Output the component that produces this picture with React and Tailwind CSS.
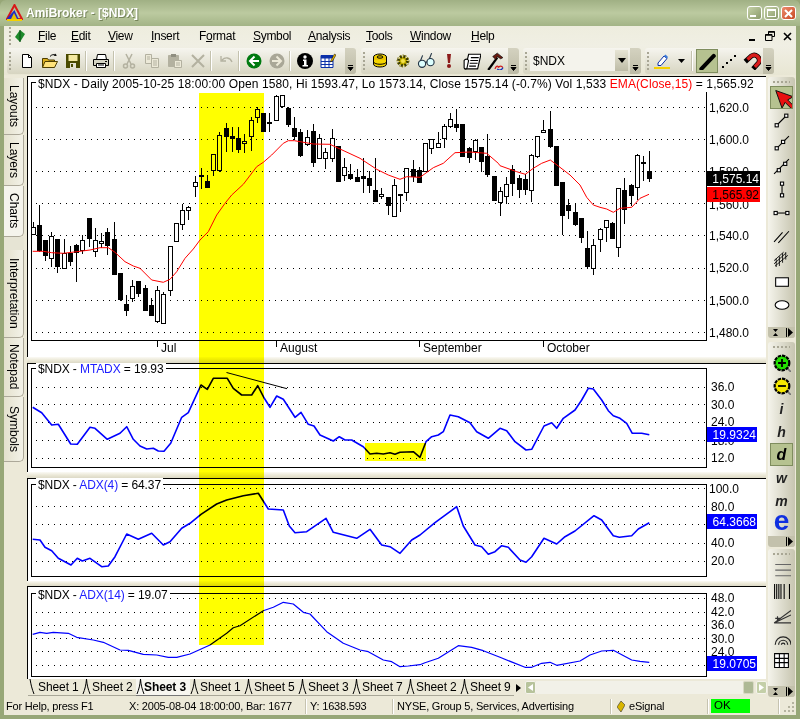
import React from "react";

const C3 = [[98,425,465,440,465,0],[118,375,515,435,513,1],[136,480,542,480,527,1],[154,456,560,468,536,0],[172,478,580,478,560,1],[193,478,566,520,566,0],[211,498,558,520,545,1],[229,492,605,495,518,1],[247,465,523,480,512,0],[268,414,500,414,476,1],[286,445,532,481,517,0],[304,458,505,484,491,0],[322,445,525,456,497,1],[343,426,585,478,584,1],[361,578,662,579,660,1],[379,645,707,672,692,1],[397,600,665,618,658,0],[415,602,650,603,641,1],[436,615,692,625,692,1],[454,655,707,675,707,1],[472,618,728,631,727,0],[490,637,733,643,733,0],[511,498,647,498,634,0],[529,430,486,430,485,0],[547,372,450,391,436,0],[565,377,420,382,394,0],[586,288,350,307,322,0],[604,265,326,286,290,1],[622,285,323,303,323,1],[640,222,288,222,274,0],[658,155,275,166,274,0],[679,129,215,145,170,1],[697,142,215,168,176,1],[715,142,218,175,209,1],[733,162,218,184,193,0],[754,112,212,120,172,0],[772,82,130,88,115,0],[790,100,155,100,155,1],[808,100,155,127,129,1],[829,44,122,48,122,0],[847,44,84,46,82,0],[865,80,140,85,136,1],[883,112,180,145,170,1]];
const C4 = [[121,148,230,156,227,1],[142,150,197,172,196,0],[160,132,260,153,248,1],[178,162,238,175,238,0],[196,205,266,216,238,0],[217,147,245,175,238,0],[235,198,307,198,305,1],[253,235,302,262,287,0],[271,252,300,282,296,1],[292,267,305,291,305,1],[310,235,340,289,296,1],[328,273,338,294,317,1],[346,235,366,330,365,1],[364,325,358,343,350,0],[385,350,404,352,377,1],[403,298,412,316,412,0],[421,342,395,342,346,1],[439,265,362,265,338,0],[460,240,305,267,292,1],[478,262,310,270,308,1],[496,190,275,190,275,0],[514,178,222,178,208,0],[535,157,204,190,203,0],[553,132,205,138,178,0],[571,100,145,118,142,0],[589,88,155,132,143,1],[607,132,230,132,230,1],[628,200,248,205,233,1],[646,178,240,181,217,0],[664,200,275,202,245,1],[682,162,290,228,284,1],[703,288,362,288,362,1],[721,322,407,334,370,0],[739,292,372,313,352,0]];
const C5 = [[37,255,347,268,311,1],[58,285,355,295,330,1],[76,282,345,298,330,1],[94,222,365,226,334,0],[112,168,233,169,230,0],[130,120,160,151,160,0],[151,94,203,148,201,1],[169,198,318,198,318,1],[187,305,465,307,407,1],[205,358,417,376,392,1],[226,370,437,396,435,1],[244,415,490,415,473,1],[262,453,567,505,561,1],[280,478,585,496,568,0],[301,445,515,448,481,0],[319,420,485,421,445,0],[337,425,477,428,476,1],[355,325,530,325,505,0],[373,295,432,331,391,1],[394,312,378,316,348,1],[412,223,360,224,323,0],[430,228,302,246,250,1],[448,214,305,274,298,1]];

const pts = (arr, ox, oy) => arr.map(([x, y]) => `${(ox + x / 3).toFixed(1)},${(oy + y / 3).toFixed(1)}`).join(" ");

const EMA = [
  pts([[98,514],[130,514],[155,518],[190,520],[230,515],[270,510],[300,503],[325,503],[345,517],[375,545],[400,558],[420,565],[455,600],[490,607],[510,598],[530,575],[555,535],[580,507],[600,480],[625,455],[650,405],[675,370],[695,345],[730,313],[770,260],[790,247],[815,225],[850,190],[865,182]],0,80),
  pts([[103,182],[121,185],[160,192],[210,193],[240,207],[300,235],[350,268],[385,285],[420,298],[440,290],[480,292],[520,263],[550,250],[585,218],[630,216],[680,220],[715,250]],260,80),
  pts([[0,257],[50,275],[76,283],[100,265],[125,250],[151,240],[175,258],[210,285],[240,315],[260,352],[280,375],[300,382],[320,387],[340,397],[360,385],[395,382],[420,355],[447,343]],500,80),
].join(" ");

const MTADX = pts([[98,202],[125,218],[155,255],[175,253],[212,312],[232,313],[270,262],[285,265],[322,298],[360,280],[380,260],[400,298],[420,318],[440,327],[460,325],[475,333],[492,334],[512,310],[545,232],[565,218],[603,135],[622,148],[640,115],[682,115],[700,145],[725,165],[755,165],[773,137],[793,175],[810,202],[830,168],[850,178],[885,232],[903,217],[925,253],[942,258],[960,285],[1000,303],[1018,290],[1035,300],[1055,300],[1090,320],[1110,342],[1130,340],[1150,342],[1170,338],[1185,343]],0,340) + " " + pts([[0,337],[40,335],[60,352],[78,305],[95,290],[115,285],[130,275],[150,225],[175,230],[210,248],[230,275],[265,295],[300,265],[320,272],[345,305],[378,330],[395,328],[432,258],[455,248],[470,265],[490,235],[525,210],[545,180],[565,145],[580,147],[605,180],[625,212],[640,227],[660,235],[680,250],[697,280],[725,280],[748,284]],400,340);

const ADX4 = pts([[98,598],[120,600],[135,622],[155,632],[175,655],[213,675],[232,655],[247,663],[270,655],[305,680],[325,678],[345,650],[380,582],[415,598],[455,580],[490,615],[510,605],[545,565],[570,550],[603,523],[650,492],[680,480],[730,467],[775,460],[805,507],[850,510],[868,558],[885,578],[920,575],[978,535],[1000,577],[1070,595],[1110,568],[1145,615],[1170,620]],0,340) + " " + pts([[0,640],[35,600],[60,585],[105,548],[170,500],[190,558],[225,615],[245,620],[265,643],[285,635],[305,617],[325,622],[360,660],[378,667],[395,650],[432,595],[470,612],[495,590],[525,573],[582,527],[605,540],[640,587],[658,592],[695,587],[715,567],[748,548]],400,340);

const ADX14 = pts([[98,163],[120,157],[140,160],[160,157],[205,160],[230,172],[280,180],[310,187],[360,210],[385,211],[430,223],[470,225],[505,232],[530,232],[570,222],[630,195],[680,160],[700,143],[720,137],[790,92],[820,82],[850,67],[880,72],[910,97],[930,102],[980,155],[1030,190],[1080,210],[1105,215],[1150,240],[1175,245]],0,580) + " " + pts([[0,260],[25,258],[60,254],[75,248],[115,235],[175,197],[215,202],[250,212],[300,232],[375,262],[395,262],[425,250],[450,247],[470,256],[540,243],[570,225],[605,213],[640,211],[695,240],[720,244],[748,247]],400,580);

function Candles() {
  const all = [...C3.map((c) => [0, ...c]), ...C4.map((c) => [260, ...c]), ...C5.map((c) => [500, ...c])];
  return all.map(([ox, x, wt, wb, bt, bb, f], i) => {
    const cx = Math.round(ox + x / 3);
    const Y = (z) => Math.round(80 + z / 3);
    const top = Y(bt), bot = Y(bb);
    return (
      <g key={i} shapeRendering="crispEdges">
        <rect x={cx} y={Y(wt)} width="1" height={Math.max(1, Y(wb) - Y(wt))} fill="#000" />
        {f ? (
          <rect x={cx - 2} y={top} width="5" height={Math.max(2, bot - top)} fill="#000" />
        ) : (
          <rect x={cx - 1.5} y={top + 0.5} width="4" height={Math.max(2, bot - top - 1)} fill="#fff" stroke="#000" />
        )}
      </g>
    );
  });
}

function Dots({ ys }) {
  const out = [];
  ys.forEach((y) => {
    for (let i = 0; i < 110; i++) {
      const x = Math.round(35.6 + i * 6.13);
      if (x < 705) out.push(<rect key={y + "-" + i} x={x} y={Math.round(y)} width="1" height="1" fill="#000" />);
    }
  });
  return <g shapeRendering="crispEdges">{out}</g>;
}

function Frame({ top, bottom }) {
  return <rect x="31.5" y={top + 0.5} width="675" height={bottom - top} fill="none" stroke="#000" shapeRendering="crispEdges" />;
}

function Ax({ x = 711, y, children }) {
  return <text x={x} y={y + 4.5} fill="#000" className="text-[12px]">{children}</text>;
}

function Tag({ children, cls }) {
  return <div className={"absolute flex items-center justify-end text-[12px] pr-[1px] leading-none " + cls}>{children}</div>;
}

function Pane({ top, h, children, label }) {
  return (
    <div className="relative bg-white shadow-[inset_1px_1px_0_#000]" style={{ height: h }}>
      <svg width="739" height={h} viewBox={`27 ${top} 739 ${h}`} className="block">{children[0]}</svg>
      {label}
      {children[1]}
    </div>
  );
}

function Sep({ h }) {
  return <div className="bg-linear-to-b from-[#fbfaf5] via-[#ece9d8] to-[#dcd9c6]" style={{ height: h }} />;
}

/* toolbar drawings */
const Ic = ({ children, s = 16 }) => <svg width={s} height={s} viewBox="0 0 16 16">{children}</svg>;
const G = "#b3b1a0";
const icons = {
  doc: <Ic><path d="M3.5 1.5h6l3 3v10h-9z" fill="#fff" stroke="#000" /><path d="M9.5 1.5v3h3" fill="none" stroke="#000" /></Ic>,
  open: <Ic><path d="M.5 5.5h5l1 1.5h6v7H.5z" fill="#d9ad1f" stroke="#4d3d00" /><path d="M3 8.5h12.5l-3 6H.5z" fill="#ffe27a" stroke="#4d3d00" /><path d="M8 3.5c1.500-2 4-2.500 6-1" fill="none" stroke="#000" /><path d="M13 .5l2 2-3 .5z" fill="#000" /></Ic>,
  save: <Ic><path d="M1 1h14v14H1z" fill="#4a4a00" /><rect x="3.500" y="2" width="9" height="6" fill="#f4e9a0" /><rect x="5" y="10" width="6" height="5" fill="#e4e2d0" /><rect x="6" y="11" width="2" height="3" fill="#4a4a00" /></Ic>,
  print: <Ic><path d="M4.500 1.500h8l1 5h-10z" fill="#fff" stroke="#000" /><path d="M.5 6.500h15v6H.5z" fill="#d5d4c4" stroke="#000" /><path d="M3.500 10.500h9v4h-9z" fill="#fff" stroke="#000" /><path d="M5 12h6" stroke="#000" /><rect x="12" y="8" width="2" height="1" fill="#000" /></Ic>,
  cut: <Ic><path d="M5 1l5 10M11 1L6 11" stroke={G} strokeWidth="1.500" fill="none" /><circle cx="4.500" cy="13" r="2" fill="none" stroke={G} strokeWidth="1.500" /><circle cx="11.500" cy="13" r="2" fill="none" stroke={G} strokeWidth="1.500" /></Ic>,
  copy: <Ic><path d="M1.500 1.500h6v9h-6z" fill="#ece9d8" stroke={G} /><path d="M7.500 5.500h7v9h-7z" fill="#ece9d8" stroke={G} /><path d="M3 4h3M3 6h3M9 8h4M9 10h4M9 12h4" stroke={G} /></Ic>,
  paste: <Ic><path d="M1.500 2.500h10v11h-10z" fill={G} stroke={G} /><rect x="4" y="1" width="5" height="3" fill="#8f8e80" /><path d="M7.500 7.500h7v7h-7z" fill="#ece9d8" stroke={G} /><path d="M9 10h4M9 12h4" stroke={G} /></Ic>,
  del: <Ic><path d="M2 2l12 12M14 2L2 14" stroke={G} strokeWidth="2" /></Ic>,
  undo: <Ic><path d="M4 7c3-3 8-3 10 2M3 3v5h5" fill="none" stroke={G} strokeWidth="1.300" /></Ic>,
  back: <Ic><circle cx="8" cy="8" r="7.500" fill="#007a10" /><path d="M8.500 3.500L4 8l4.500 4.500M4.500 8H13" fill="none" stroke="#fff" strokeWidth="2" /></Ic>,
  fwd: <Ic><circle cx="8" cy="8" r="7.500" fill="#a9a797" /><path d="M7.500 3.500L12 8l-4.500 4.500M11.500 8H3" fill="none" stroke="#ece9d8" strokeWidth="2" /></Ic>,
  info: <Ic><circle cx="8" cy="8" r="8" fill="#000" /><circle cx="8" cy="4" r="1.700" fill="#fff" /><path d="M6 6.500h3.500V12H11v1.500H5.500V12H7V8H6z" fill="#fff" /></Ic>,
  calc: <Ic><path d="M1 2.500h12v12H1z" fill="#fff" stroke="#0a2fa8" /><path d="M1 2.500h12v3H1z" fill="#0a2fa8" /><path d="M1 8.500h12M1 11.500h12M5 5v9M9 5v9" stroke="#0a2fa8" /><path d="M11 7l3.500-6 1.500 1-3.500 6-2 1z" fill="#e8b400" stroke="#000" strokeWidth=".5" /></Ic>,
  coins: <Ic><ellipse cx="8" cy="4" rx="6.500" ry="3" fill="#f5d500" stroke="#000" /><path d="M1.500 4v3c0 4 13 4 13 0V4" fill="#e9c400" stroke="#000" /><path d="M1.500 7v4c0 4 13 4 13 0V7" fill="#f5d500" stroke="#000" /><path d="M1.500 9c1 3 12 3 13 0" fill="none" stroke="#000" /><ellipse cx="8" cy="4" rx="3" ry="1.200" fill="none" stroke="#000" /></Ic>,
  gear: <Ic><circle cx="8" cy="8" r="4.500" fill="#c7b400" stroke="#3b3b00" strokeWidth="3" strokeDasharray="2 1.500" /><circle cx="8" cy="8" r="2" fill="#f2e14a" /><circle cx="8" cy="8" r="6" fill="none" stroke="#8a7d00" strokeDasharray="1.500 1.500" /></Ic>,
  glass: <Ic s={18}><circle cx="4.500" cy="10.500" r="3.200" fill="#dff" stroke="#234" /><circle cx="12" cy="9" r="3.200" fill="#dff" stroke="#234" /><path d="M7.500 9.500c1-.8 1.200-.8 1.700-.8M3 8l2-5M11 6l2-5" fill="none" stroke="#234" /></Ic>,
  bang: <Ic><path d="M6 1h4l-1 9H7z" fill="#8c1a1a" /><circle cx="8" cy="13" r="2" fill="#8c1a1a" /></Ic>,
  notes: <Ic s={18}><path d="M5 2h11l-3 13H2z" fill="#fff" stroke="#000" /><path d="M1 7.500c1-1.500 3-1.500 4 0l-1.500 7c-1 1-2.500.5-2.500-.5z" fill="#fff" stroke="#000" /><path d="M7 5h7M6.500 7.500h7M6 10h7M5.500 12.500h6" stroke="#000" /></Ic>,
  ham: <Ic s={18}><path d="M2 16L10 5" stroke="#000" strokeWidth="2" /><path d="M6 4l4-3 5 4-2 1-3-2-1 3z" fill="#6a1a10" stroke="#000" strokeWidth=".6" /><path d="M8 15c1-3 3-3 3-1M11 14c1-2 3-2 4 0" fill="none" stroke="#d01818" strokeWidth="1.200" /><path d="M10 15c2 2 4 1 5-1" fill="none" stroke="#1030c0" strokeWidth="1.200" /></Ic>,
  hl: <Ic><path d="M4 10l6-7 3 2.500-6 7H4z" fill="#fff" stroke="#0a2fa8" /><path d="M10 3l1.500-1.500L14 4l-1 1.500z" fill="#3a7ad8" /><rect x="0" y="14" width="16" height="2" fill="#f5cf00" /></Ic>,
  thick: <Ic s={18}><path d="M3 15L14 3.500" stroke="#000" strokeWidth="3.600" strokeLinecap="round" /></Ic>,
  dotted: <Ic><g fill="#000"><rect x="1" y="13" width="2" height="2" /><rect x="5" y="9" width="2" height="2" /><rect x="9" y="6" width="2" height="2" /><rect x="13" y="2" width="2" height="2" /></g></Ic>,
  magnet: <Ic s={18}><path d="M2 8.500L7.500 3.500C11 1 16 5 14 9.500L9 15" fill="none" stroke="#000" strokeWidth="4.400" /><path d="M4 6.700L7.500 3.500C11 1 16 5 14 9.500L10.500 13.300" fill="none" stroke="#d81c1c" strokeWidth="3" /></Ic>,
};

function Grip({ v }) {
  const n = [0, 1, 2, 3, 4];
  return v ? (
    <svg width="17" height="2" className="block mx-auto">{n.map((i) => <rect key={i} x={i * 4} y="0" width="2" height="2" fill="#a8a694" />)}</svg>
  ) : (
    <svg width="2" height="18" className="block">{n.map((i) => <rect key={i} x="0" y={i * 4} width="2" height="2" fill="#a8a694" />)}</svg>
  );
}

function Chev() {
  return (
    <div className="ml-auto w-[11px] self-stretch bg-linear-to-b from-[#d4d2c0] to-[#bdbba6] rounded-r-[3px] flex flex-col items-center justify-end pb-[3px]">
      <svg width="7" height="6"><path d="M1 0.500h5M1 2.500h5L3.500 5.500z" stroke="#000" strokeWidth="1" fill="#000" /></svg>
    </div>
  );
}

function Band({ cls, children }) {
  return <div className={"flex items-center h-[26px] rounded-[3px] bg-linear-to-b from-[#f6f5ef] to-[#d7d5c1] " + cls}>{children}</div>;
}
const Slot = ({ i, cls = "w-[23px]" }) => <div className={"flex items-center justify-center " + cls}>{icons[i]}</div>;
const TSep = ({ cls = "w-[5px]" }) => <div className={"flex justify-center " + cls}><div className="w-px h-[20px] bg-[#fff] shadow-[-1px_0_0_#c4c2ae]" /></div>;

/* right-hand drawings */
const rIcons = {
  arrow: <Ic s={20}><path d="M3 2l5 14 2.500-4.500L16 17l2-2-5.500-5.500L17 7z" fill="#e81010" stroke="#111" strokeWidth=".8" /></Ic>,
  seg: <Ic s={17}><path d="M4 12L12 4" stroke="#000" /><rect x="2" y="11" width="3" height="3" fill="#fff" stroke="#000" /><rect x="11" y="2" width="3" height="3" fill="#fff" stroke="#000" /></Ic>,
  ray: <Ic s={17}><path d="M3 13L15 1" stroke="#000" /><rect x="2" y="11" width="3" height="3" fill="#fff" stroke="#000" /><rect x="8" y="5" width="3" height="3" fill="#fff" stroke="#000" /></Ic>,
  ext: <Ic s={17}><path d="M1 15L15 1" stroke="#000" /><rect x="4" y="10" width="3" height="3" fill="#fff" stroke="#000" /><rect x="10" y="4" width="3" height="3" fill="#fff" stroke="#000" /></Ic>,
  vert: <Ic s={17}><path d="M8.500 3v10" stroke="#000" /><rect x="7" y="1" width="3" height="3" fill="#fff" stroke="#000" /><rect x="7" y="12" width="3" height="3" fill="#fff" stroke="#000" /></Ic>,
  horz: <Ic s={17}><path d="M3 8.500h10" stroke="#000" /><rect x="1" y="7" width="3" height="3" fill="#fff" stroke="#000" /><rect x="12" y="7" width="3" height="3" fill="#fff" stroke="#000" /></Ic>,
  par: <Ic s={17}><path d="M1 14L9 5M5 15L15 4" stroke="#000" fill="none" /></Ic>,
  fib: <Ic s={17}><path d="M1 13L12 3M2 15L14 5M1 10L10 2M3 16V8M6 15V6M9 12V3M12 9V2" stroke="#000" strokeWidth=".8" fill="none" /></Ic>,
  rect: <Ic s={17}><rect x="2.500" y="4.500" width="12" height="8" fill="#fff" stroke="#000" /></Ic>,
  ell: <Ic s={17}><ellipse cx="8.500" cy="8.500" rx="6.500" ry="4" fill="#fff" stroke="#000" /></Ic>,
  zin: <Ic s={18}><path d="M12 12l4 4" stroke="#777" strokeWidth="1.500" /><circle cx="8" cy="8" r="6.500" fill="#22e000" stroke="#000" strokeWidth="2" strokeDasharray="3 .8" /><path d="M8 4.500v7M4.500 8h7" stroke="#000" strokeWidth="1.600" /></Ic>,
  zout: <Ic s={18}><path d="M12 12l4 4" stroke="#777" strokeWidth="1.500" /><circle cx="8" cy="8" r="6.500" fill="#f6e800" stroke="#000" strokeWidth="2" strokeDasharray="3 .8" /><path d="M4.500 8h7" stroke="#000" strokeWidth="1.600" /></Ic>,
  hl: <Ic s={18}><path d="M2 4h14M2 9h14M2 14h14" stroke="#666" /></Ic>,
  vl: <Ic s={17}><path d="M1.500 1v14M3.500 1v14M5.500 1v14M7.500 1v14M10.500 1v14M15.500 1v14" stroke="#000" /></Ic>,
  fan: <Ic s={18}><path d="M1 15L16 4M1 15L16 8M1 15h15M2 11h5M4 14V9" stroke="#333" fill="none" /></Ic>,
  arc: <Ic s={18}><path d="M2 14a7 7 0 0 1 14 0M5 14a4 4 0 0 1 8 0M7.500 14a1.500 1.500 0 0 1 3 0" stroke="#222" strokeWidth="1.100" fill="none" /></Ic>,
  grid: <Ic s={17}><path d="M1.500 1.500h13v13h-13zM1.500 6h13M1.500 10h13M6 1.500v13M10.500 1.500v13" stroke="#000" fill="#fff" /></Ic>,
};

const RSlot = ({ i }) => <div className="h-[23px] flex items-center justify-center">{rIcons[i]}</div>;
const Letter = ({ t }) => <div className="h-[23px] flex items-center justify-center font-bold italic text-[14px] text-[#222] leading-none">{t}</div>;
const Sel = ({ children }) => <div className="h-[23px] w-[23px] mx-auto flex items-center justify-center bg-[#b6c290] border border-[#7f8d5e]">{children}</div>;

function VBand({ cls, children, double = false }) {
  return (
    <div className={"flex flex-col w-[27px] rounded-[3px] bg-linear-to-r from-[#f5f4ec] to-[#c7c5b0] " + cls}>
      {children}
      <div className="mt-auto h-[11px] bg-[#c3c1ac] rounded-b-[3px] flex items-center justify-end gap-[7px] pr-[2px]">
        {double && <svg width="7" height="9"><path d="M1 1h5L3.500 4zM1 8h5L3.500 5z" fill="#000" /></svg>}
        <svg width="7" height="9"><path d="M0.500 0v9" stroke="#000" /><path d="M2 0l5 4.500L2 9z" fill="#000" /></svg>
      </div>
    </div>
  );
}

const Menu = ({ cls, u, rest, pre = "" }) => (
  <div className={"text-[12px] tracking-[-0.3px] leading-[20px] text-black " + cls}>{pre}<span className="underline">{u}</span>{rest}</div>
);

const LTab = ({ cls, t }) => (
  <div className={"flex items-center justify-center rounded-br-[5px] border-b border-r border-[#aca899] [writing-mode:vertical-rl] text-[12px] text-black bg-linear-to-l from-[#f3f2e8] to-[#e4e1cd] " + cls}>{t}</div>
);

function SheetSep({ first }) {
  return (
    <svg width="10" height="16" className="shrink-0">
      {first ? <path d="M2 0c1 6 2 10 4 15" fill="none" stroke="#000" /> : <path d="M4.500 0C4 6 3 10 1 15M4.500 0c.5 6 1.500 10 3.500 15" fill="none" stroke="#000" />}
    </svg>
  );
}
const Sheet = ({ t, bold, first }) => (
  <div className={"flex items-center w-[54px] h-full text-[12px] tracking-[-0.1px] " + (bold ? "font-bold bg-[#f7f6f0] border-b border-[#777]" : "border-b border-[#a9a798]")}>
    <SheetSep first={first} />
    <span className={bold ? "-ml-[2px] whitespace-nowrap" : "whitespace-nowrap"}>{t}</span>
  </div>
);
const SB = ({ cls, children }) => <div className={"flex items-center text-[11px] tracking-[-0.2px] text-black whitespace-nowrap h-full " + cls}>{children}</div>;
const SSep = () => <div className="w-[2px] h-[15px] bg-[#c6c3b0] border-r border-white self-center" />;

export default function App() {
  return (
    <div className="w-[800px] h-[719px] overflow-hidden flex flex-col bg-[#97a777] font-['Liberation_Sans',Arial,sans-serif] text-black">
      {/* title bar */}
      <div className="h-[26px] flex items-center bg-linear-to-b from-[#a0b084] via-[#bccaa0] to-[#a3b486] rounded-t-[6px] pl-[6px] pr-[4px]">
        <svg width="17" height="18" viewBox="0 0 17 18" className="shrink-0">
          <path d="M8.500 1L16 15H1z" fill="none" stroke="#d81818" strokeWidth="2" />
          <path d="M8.500 6L12.500 15H.5z" fill="#1c2cc8" />
          <path d="M1 15h15v2H1z" fill="#f3d000" />
          <path d="M8 9l3 6H5z" fill="#e8c000" />
        </svg>
        <span className="ml-[3px] text-[12px] font-bold text-white [text-shadow:1px_1px_0_#76855a]">AmiBroker - [$NDX]</span>
        <div className="ml-auto flex gap-[2px]">
          <div className="w-[15px] h-[14px] rounded-[3px] border border-white bg-linear-to-br from-[#c6d2a8] to-[#8b9b6c] flex items-end justify-start p-[2px]"><div className="w-[6px] h-[2px] bg-white" /></div>
          <div className="w-[15px] h-[14px] rounded-[3px] border border-white bg-linear-to-br from-[#c6d2a8] to-[#8b9b6c] flex items-center justify-center"><div className="w-[9px] h-[8px] border border-white border-t-2" /></div>
          <div className="w-[15px] h-[14px] rounded-[3px] border border-white bg-linear-to-br from-[#ec8a6c] to-[#c84820] flex items-center justify-center">
            <svg width="9" height="9"><path d="M1 1l7 7M8 1L1 8" stroke="#fff" strokeWidth="2" /></svg>
          </div>
        </div>
      </div>
      {/* window body */}
      <div className="flex-1 flex flex-col mx-[4px] mb-[4px] bg-[#ece9d8] min-h-0">
        {/* menu */}
        <div className="h-[20px] flex items-center bg-linear-to-b from-[#eeedde] to-[#f0efe4] relative">
          <div className="ml-[5px] w-[29px] flex items-center gap-[4px]">
            <Grip />
            <svg width="10" height="12" viewBox="0 0 10 12"><path d="M5 0l5 4-5 8-5-5z" fill="#1d8a2a" /><path d="M5 0v12" stroke="#0a4a14" /></svg>
          </div>
          <Menu cls="w-[33px]" u="F" rest="ile" />
          <Menu cls="w-[37px]" u="E" rest="dit" />
          <Menu cls="w-[43px]" u="V" rest="iew" />
          <Menu cls="w-[48px]" u="I" rest="nsert" />
          <Menu cls="w-[54px]" pre="F" u="o" rest="rmat" />
          <Menu cls="w-[55px]" u="S" rest="ymbol" />
          <Menu cls="w-[58px]" u="A" rest="nalysis" />
          <Menu cls="w-[44px]" u="T" rest="ools" />
          <Menu cls="w-[61px]" u="W" rest="indow" />
          <Menu cls="w-[40px]" u="H" rest="elp" />
          <div className="ml-auto mr-[4px] flex items-center gap-[8px]">
            <svg width="9" height="12"><rect x="1" y="9" width="6" height="2" fill="#000" /></svg>
            <svg width="10" height="10"><path d="M3.500 3V.5h6v5H7M.5 3.500h6.500v6H.5z" fill="none" stroke="#000" /><path d="M.5 4h6.500M3.500 1h6" stroke="#000" strokeWidth="1.500" /></svg>
            <svg width="9" height="9"><path d="M1 1l7 7M8 1L1 8" stroke="#000" strokeWidth="1.600" /></svg>
          </div>
        </div>
        {/* toolbars */}
        <div className="h-[29px] flex items-center pl-[3px] gap-[5px] bg-linear-to-b from-[#f0efe4] to-[#e8e6d3]">
          <Band cls="w-[349px] pl-[2px]">
            <div className="w-[6px]"><Grip /></div>
            <Slot i="doc" /><Slot i="open" /><Slot i="save" /><TSep />
            <Slot i="print" /><TSep />
            <Slot i="cut" /><Slot i="copy" /><Slot i="paste" /><Slot i="del" /><TSep />
            <Slot i="undo" /><TSep />
            <Slot i="back" /><Slot i="fwd" /><TSep />
            <Slot i="info" /><Slot i="calc" />
            <Chev />
          </Band>
          <Band cls="w-[158px] pl-[2px]">
            <div className="w-[5px]"><Grip /></div>
            <Slot i="coins" /><Slot i="gear" /><Slot i="glass" /><Slot i="bang" /><Slot i="notes" /><Slot i="ham" />
            <Chev />
          </Band>
          <Band cls="w-[118px] pl-[2px] -ml-[1px]">
            <div className="w-[5px]"><Grip /></div>
            <div className="w-[98px] h-[21px] bg-[#f4f3ec] flex items-center text-[12px] pl-[3px]">
              $NDX
              <div className="ml-auto w-[13px] h-full bg-linear-to-b from-[#e6e4d4] to-[#bdbba6] flex items-center justify-center">
                <svg width="8" height="5"><path d="M0 0h8L4 5z" fill="#000" /></svg>
              </div>
            </div>
            <Chev />
          </Band>
          <Band cls="w-[129px] pl-[2px] -ml-[1px]">
            <div className="w-[5px]"><Grip /></div>
            <Slot i="hl" cls="w-[20px]" />
            <div className="w-[14px] flex justify-center ml-[3px]"><svg width="7" height="4"><path d="M0 0h7L3.500 4z" fill="#000" /></svg></div>
            <TSep cls="w-[7px]" />
            <div className="w-[23px] h-[24px] flex items-center justify-center bg-[#b6c290] border border-[#7f8d5e]">{icons.thick}</div>
            <Slot i="dotted" cls="w-[22px]" />
            <Slot i="magnet" cls="w-[23px]" />
            <Chev />
          </Band>
        </div>
        {/* main */}
        <div className="flex-1 flex min-h-0">
          {/* left tabs */}
          <div className="w-[23px] flex flex-col pt-[3px] pr-[3px]">
            <LTab cls="h-[57px]" t="Layouts" />
            <LTab cls="h-[51px]" t="Layers" />
            <div className="h-[51px] w-[20px] flex items-center justify-center rounded-br-[5px] border-b border-r border-[#aca899] bg-[#f5f4ec] [writing-mode:vertical-rl] text-[12px]">Charts</div>
            <div className="h-[13px] bg-[#e6e4d4]" />
            <LTab cls="h-[88px]" t="Interpretation" />
            <LTab cls="h-[59px]" t="Notepad" />
            <LTab cls="h-[65px]" t="Symbols" />
          </div>
          {/* centre */}
          <div className="w-[739px] flex flex-col relative">
            <div className="h-[1px]" />
            <Pane top={76} h={281} label={
              <div className="absolute left-[9px] top-[1px] bg-white px-[2px] leading-[15px] text-[12px] tracking-[0.1px] whitespace-nowrap">
                $NDX - Daily 2005-10-25 18:00:00 Open 1580, Hi 1593.47, Lo 1573.14, Close 1575.14 (-0.7%) Vol 1,533 <span className="text-[#ff0000]">EMA(Close,15)</span> = 1,565.92
              </div>
            }>
              {[
                <g key="s">
                  <Dots ys={[107.3, 139.3, 171.3, 203.3, 235.3, 268, 300, 332.3]} />
                  <Frame top={82} bottom={340} />
                  <Candles />
                  <polyline points={EMA} fill="none" stroke="#ff0000" strokeWidth="1" />
                  {[["1,620.0", 107], ["1,600.0", 139.5], ["1,580.0", 171], ["1,560.0", 204], ["1,540.0", 235], ["1,520.0", 267], ["1,500.0", 300], ["1,480.0", 332]].map(([t, y]) => <Ax key={t} x={709} y={y}>{t}</Ax>)}
                  <g shapeRendering="crispEdges" fill="#000">
                    <rect x="157" y="341" width="1" height="6" /><rect x="276" y="341" width="1" height="6" /><rect x="419" y="341" width="1" height="6" /><rect x="543" y="341" width="1" height="6" />
                  </g>
                  <text x="161" y="352" className="text-[12px]">Jul</text>
                  <text x="280" y="352" className="text-[12px]">August</text>
                  <text x="423" y="352" className="text-[12px]">September</text>
                  <text x="547" y="352" className="text-[12px]">October</text>
                </g>,
                <React.Fragment key="h">
                  <Tag cls="left-[680px] top-[95px] w-[53px] h-[15px] bg-black text-white">1,575.14</Tag>
                  <Tag cls="left-[680px] top-[111px] w-[53px] h-[15px] bg-[#ff0000] text-black">1,565.92</Tag>
                </React.Fragment>,
              ]}
            </Pane>
            <Sep h={6} />
            <Pane top={363} h={109} label={
              <div className="absolute left-[9px] top-0 bg-white px-[2px] leading-[13px] text-[12px] tracking-[-0.1px] whitespace-nowrap">$NDX - <span className="text-[#2020ff]">MTADX</span> = 19.93</div>
            }>
              {[
                <g key="s">
                  <Dots ys={[386.7, 404.3, 422.3, 440, 458.3]} />
                  <Frame top={368} bottom={467} />
                  {[["36.0", 386], ["30.0", 404], ["24.0", 421.5], ["18.0", 440], ["12.0", 457.5]].map(([t, y]) => <Ax key={t} y={y}>{t}</Ax>)}
                  <polyline points={MTADX} fill="none" stroke="#0000ff" strokeWidth="1.600" strokeLinejoin="round" />
                  <path d="M226.500 372.500L287 388.700" stroke="#000" strokeWidth="1" />
                </g>,
                <Tag key="h" cls="left-[680px] top-[64px] w-[50px] h-[15px] bg-[#0000ff] text-white">19.9324</Tag>,
              ]}
            </Pane>
            <Sep h={6} />
            <Pane top={478} h={103} label={
              <div className="absolute left-[9px] top-0 bg-white px-[2px] leading-[14px] text-[12px] tracking-[-0.1px] whitespace-nowrap">$NDX - <span className="text-[#2020ff]">ADX(4)</span> = 64.37</div>
            }>
              {[
                <g key="s">
                  <Dots ys={[488.3, 505.7, 524.3, 542.7, 560.7]} />
                  <Frame top={484} bottom={576} />
                  {[["100.0", 488, 709], ["80.0", 506.3, 711], ["60.0", 524, 711], ["40.0", 542, 711], ["20.0", 560, 711]].map(([t, y, x]) => <Ax key={t} x={x} y={y}>{t}</Ax>)}
                  <polyline points={ADX4} fill="none" stroke="#0000ff" strokeWidth="1.600" strokeLinejoin="round" />
                </g>,
                <Tag key="h" cls="left-[680px] top-[36px] w-[50px] h-[15px] bg-[#0000ff] text-white">64.3668</Tag>,
              ]}
            </Pane>
            <Sep h={5} />
            <Pane top={586} h={93} label={
              <div className="absolute left-[9px] top-[2px] bg-white px-[2px] leading-[14px] text-[12px] tracking-[-0.1px] whitespace-nowrap">$NDX - <span className="text-[#2020ff]">ADX(14)</span> = 19.07</div>
            }>
              {[
                <g key="s">
                  <Dots ys={[597.7, 611.7, 625, 637.7, 651.3, 665]} />
                  <Frame top={593} bottom={676} />
                  {[["48.0", 597.7], ["42.0", 611.7], ["36.0", 624.5], ["30.0", 638], ["24.0", 651.5]].map(([t, y]) => <Ax key={t} y={y}>{t}</Ax>)}
                  <polyline points={ADX14} fill="none" stroke="#0000ff" strokeWidth="1.200" strokeLinejoin="round" />
                </g>,
                <Tag key="h" cls="left-[680px] top-[70px] w-[50px] h-[15px] bg-[#0000ff] text-white">19.0705</Tag>,
              ]}
            </Pane>
            {/* sheet tabs */}
            <div className="flex-1 flex items-start pl-[1px] bg-[#ece9d8]">
              <div className="flex h-[17px] items-center">
                <Sheet t="Sheet 1" first />
                <Sheet t="Sheet 2" />
                <Sheet t="Sheet 3" bold />
                <Sheet t="Sheet 1" />
                <Sheet t="Sheet 5" />
                <Sheet t="Sheet 3" />
                <Sheet t="Sheet 7" />
                <Sheet t="Sheet 2" />
                <Sheet t="Sheet 9" />
                <svg width="9" height="8" className="ml-[1px] shrink-0"><path d="M1 0l5 4-5 4z" fill="#000" /></svg>
                <div className="w-[11px] h-[13px] ml-[1px] rounded-[2px] bg-[#b7c39b] border border-[#f5f4ec] flex items-center justify-center"><svg width="5" height="7"><path d="M5 0v7L0 3.500z" fill="#fff" /></svg></div>
                <div className="w-[207px] h-[13px] bg-[#f2f1e8]" />
                <div className="w-[11px] h-[13px] rounded-[2px] bg-[#aeb995] border border-[#d8d8c4]" />
                <div className="w-[11px] h-[13px] ml-[2px] rounded-[2px] bg-[#c4cfa8] border border-[#f5f4ec] flex items-center justify-center"><svg width="5" height="7"><path d="M0 0v7l5-3.500z" fill="#fff" /></svg></div>
              </div>
            </div>
            {/* drawing overlays */}
            <div className="absolute left-[172px] top-[18px] w-[65px] h-[552px] bg-[#ffff00] mix-blend-multiply pointer-events-none" />
            <div className="absolute left-[338px] top-[368px] w-[61px] h-[18px] bg-[#ffff00] mix-blend-multiply pointer-events-none" />
          </div>
          {/* right toolbars */}
          <div className="w-[28px] ml-[2px] flex flex-col pt-[2px]">
            <VBand cls="h-[261px]" double>
              <div className="h-[9px] pt-[4px]"><Grip v /></div>
              <Sel>{rIcons.arrow}</Sel>
              <RSlot i="seg" /><RSlot i="ray" /><RSlot i="ext" /><RSlot i="vert" /><RSlot i="horz" /><RSlot i="par" /><RSlot i="fib" /><RSlot i="rect" /><RSlot i="ell" />
            </VBand>
            <VBand cls="h-[205px] mt-[4px]">
              <div className="h-[9px] pt-[4px]"><Grip v /></div>
              <RSlot i="zin" /><RSlot i="zout" />
              <Letter t="i" /><Letter t="h" />
              <Sel><span className="font-bold italic text-[16px] leading-none">d</span></Sel>
              <Letter t="w" /><Letter t="m" />
              <div className="h-[23px] flex items-center justify-center font-bold text-[28px] leading-none text-[#1030e0] -mt-[3px]">e</div>
            </VBand>
            <VBand cls="h-[148px] mt-[2px]" double>
              <div className="h-[8px] pt-[4px]"><Grip v /></div>
              <RSlot i="hl" /><RSlot i="vl" /><RSlot i="fan" /><RSlot i="arc" /><RSlot i="grid" />
            </VBand>
          </div>
        </div>
        {/* status bar */}
        <div className="h-[18px] flex items-center bg-[#ece9d8]">
          <SB cls="w-[125px] pl-[2px]">For Help, press F1</SB>
          <SB cls="w-[176px]">X: 2005-08-04 18:00:00, Bar: 1677</SB>
          <SSep />
          <SB cls="w-[85px] pl-[3px]">Y: 1638.593</SB>
          <SSep />
          <SB cls="w-[216px] pl-[3px]">NYSE, Group 5, Services, Advertising</SB>
          <SSep />
          <SB cls="w-[95px] pl-[5px] gap-[3px]">
            <svg width="8" height="11" viewBox="0 0 8 11" className="shrink-0"><path d="M4 0l4 4-4 7-4-5z" fill="#d9b600" stroke="#333" strokeWidth=".6" /></svg>
            <span className="ml-[1px]">eSignal</span>
          </SB>
          <SSep />
          <div className="ml-[2px] w-[39px] h-[14px] bg-[#00ff00] flex items-center pl-[3px] text-[11.500px]">OK</div>
          <div className="w-[28px]" />
          <SSep />
          <svg width="14" height="14" className="ml-auto mt-[2px]"><g fill="#b5b39f"><rect x="10" y="2" width="2" height="2" /><rect x="6" y="6" width="2" height="2" /><rect x="10" y="6" width="2" height="2" /><rect x="2" y="10" width="2" height="2" /><rect x="6" y="10" width="2" height="2" /><rect x="10" y="10" width="2" height="2" /></g></svg>
        </div>
      </div>
    </div>
  );
}
